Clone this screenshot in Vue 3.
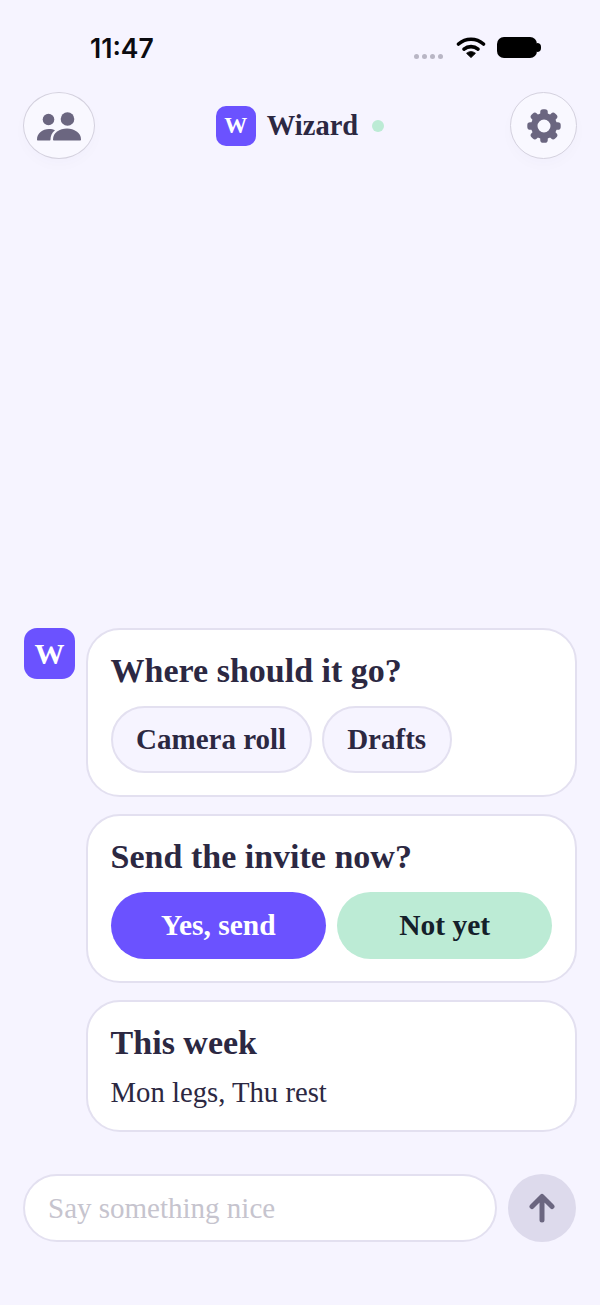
<script setup>
import { ref } from 'vue';

const message = ref('');
const where = ['Camera roll', 'Drafts'];
const teeth = [0, 45, 90, 135, 180, 225, 270, 315];
</script>

<template>
  <div class="screen">
    <div class="status">
      <span class="time">11:47</span>
      <div class="status-right">
        <div class="signal"><i></i><i></i><i></i><i></i></div>
        <svg class="wifi" width="30" height="22" viewBox="0 0 30 22">
          <path d="M2.500 8C9.800 1.600 20.200 1.600 27.500 8" fill="none" stroke="#000" stroke-width="3.600" stroke-linecap="round" />
          <path d="M8 13.200C12 9.800 18 9.800 22 13.200" fill="none" stroke="#000" stroke-width="3.600" stroke-linecap="round" />
          <path d="M15 21.500L10.600 17.300C13 15.200 17 15.200 19.400 17.300Z" fill="#000" stroke="#000" stroke-linejoin="round" />
        </svg>
        <div class="battery"></div>
      </div>
    </div>

    <header class="header">
      <button class="round-btn people">
        <svg width="46" height="32" viewBox="0 0 46 32" fill="#6b6680">
          <circle cx="12.500" cy="9.500" r="5.800" />
          <circle cx="31.500" cy="9" r="6.800" />
          <path d="M1 29.500C1 23.500 6.500 19 13 19C15.500 19 17.500 19.500 19 20.300C15.800 22.800 14.500 26 14.500 29.500C14.500 30.200 14.200 30.500 13.500 30.500H2C1.300 30.500 1 30.200 1 29.500Z" />
          <path d="M17 29.500C17 22.500 23.500 18.500 31 18.500C38 18.500 45 22.500 45 29.500C45 30.300 44.500 30.500 44 30.500H18C17.500 30.500 17 30.300 17 29.500Z" />
        </svg>
      </button>
      <div class="brand">
        <div class="logo small">W</div>
        <span class="brand-name">Wizard</span>
        <span class="online"></span>
      </div>
      <button class="round-btn gear">
        <svg width="34" height="34" viewBox="0 0 34 34" fill="#6b6680">
          <circle cx="17" cy="17" r="9.750" fill="none" stroke="#6b6680" stroke-width="6.500" />
          <rect
            v-for="angle in teeth"
            :key="angle"
            x="13.250"
            y="0.300"
            width="7.500"
            height="7"
            rx="2.800"
            :transform="`rotate(${angle} 17 17)`"
          />
        </svg>
      </button>
    </header>

    <main class="chat">
      <div class="logo big">W</div>
      <div class="cards">
        <section class="card">
          <h2>Where should it go?</h2>
          <div class="chips">
            <button v-for="item in where" :key="item" class="chip">{{ item }}</button>
          </div>
        </section>
        <section class="card">
          <h2>Send the invite now?</h2>
          <div class="choices">
            <button class="choice yes">Yes, send</button>
            <button class="choice no">Not yet</button>
          </div>
        </section>
        <section class="card">
          <h2>This week</h2>
          <p>Mon legs, Thu rest</p>
        </section>
      </div>
    </main>

    <footer class="composer">
      <input v-model="message" class="input" placeholder="Say something nice" />
      <button class="send">
        <svg width="28" height="30" viewBox="0 0 28 30" fill="none" stroke="#6b6680" stroke-width="5" stroke-linecap="round" stroke-linejoin="round">
          <path d="M14 27V4M4 13.500L14 3.500L24 13.500" />
        </svg>
      </button>
    </footer>
  </div>
</template>

<style>
body {
  background: #f6f4ff;
}
</style>

<style scoped>
.screen {
  width: 600px;
  height: 1305px;
  display: flex;
  flex-direction: column;
  background: #f6f4ff;
  font-family: "Liberation Serif", serif;
  color: #2c2842;
  overflow: hidden;
}

.status {
  height: 92px;
  flex-shrink: 0;
  display: flex;
  justify-content: space-between;
  padding: 31px 60px 0 90px;
  box-sizing: border-box;
}

.time {
  font-family: Inter, sans-serif;
  font-weight: 600;
  font-size: 26.500px;
  line-height: 34px;
  color: #0b0b10;
}

.status-right {
  display: flex;
  align-items: flex-start;
  margin-top: 6px;
}

.signal {
  display: flex;
  gap: 3px;
  margin-top: 17px;
  margin-right: 13px;
}

.signal i {
  width: 5px;
  height: 5px;
  border-radius: 50%;
  background: #b9b6c5;
}

.wifi {
  margin-right: 11px;
  margin-top: -1.500px;
}

.battery {
  position: relative;
  width: 40px;
  height: 21px;
  margin-right: 3px;
  border-radius: 7px;
  background: #000;
}

.battery::after {
  content: "";
  position: absolute;
  right: -4px;
  top: 6px;
  width: 4px;
  height: 9px;
  border-radius: 0 4px 4px 0;
  background: #000;
}

.header {
  display: flex;
  align-items: center;
  justify-content: space-between;
  padding: 0 23px;
  flex-shrink: 0;
}

.round-btn {
  height: 67px;
  border-radius: 50%;
  border: 1px solid #d4d1de;
  background: #f9f8ff;
  box-shadow: 0 6px 14px rgba(70, 60, 120, 0.02);
  display: flex;
  align-items: center;
  justify-content: center;
  padding: 0;
}

.people {
  width: 72px;
}

.gear {
  width: 67px;
}

.brand {
  display: flex;
  align-items: center;
  margin-right: 5px;
}

.logo {
  display: flex;
  align-items: center;
  justify-content: center;
  background: #6b52ff;
  color: #fff;
  font-weight: 700;
}

.logo.small {
  width: 40px;
  height: 40px;
  border-radius: 10px;
  font-size: 23px;
}

.logo.big {
  width: 51px;
  height: 51px;
  border-radius: 13px;
  font-size: 30px;
  flex-shrink: 0;
}

.brand-name {
  margin-left: 11px;
  font-size: 28.500px;
  font-weight: 700;
}

.online {
  width: 12px;
  height: 12px;
  margin-left: 14px;
  border-radius: 50%;
  background: #bcebd5;
}

.chat {
  margin-top: auto;
  display: flex;
  align-items: flex-start;
  gap: 12px;
  padding: 0 23px 0 24px;
}

.cards {
  flex: 1;
  display: flex;
  flex-direction: column;
  gap: 17.330px;
  margin-left: -1px;
}

.card {
  background: #fff;
  border: 2px solid #e3e0f0;
  border-radius: 34px;
  padding: 22px 22.600px;
}

h2 {
  margin: 0;
  font-size: 34px;
  line-height: 37px;
  font-weight: 700;
}

.card p {
  margin: 16px 0 0;
  font-size: 28.700px;
  line-height: 31px;
}

.chips {
  display: flex;
  gap: 10px;
  margin-top: 17px;
}

.chip {
  height: 66.670px;
  padding: 0 23.500px;
  border-radius: 34px;
  border: 2px solid #e3e0f0;
  background: #f6f4ff;
  color: #2c2842;
  font: 700 29px "Liberation Serif", serif;
}

.choices {
  display: grid;
  grid-template-columns: 1fr 1fr;
  gap: 11px;
  margin-top: 17px;
}

.choice {
  height: 66.670px;
  border: 0;
  border-radius: 34px;
  font: 700 29.500px "Liberation Serif", serif;
}

.yes {
  background: #6b52ff;
  color: #fff;
}

.no {
  background: #bcebd5;
  color: #14202a;
}

.composer {
  display: flex;
  align-items: center;
  gap: 11px;
  padding: 42px 24px 63px 23px;
  flex-shrink: 0;
}

.input {
  flex: 1;
  min-width: 0;
  height: 68px;
  box-sizing: border-box;
  padding: 0 23px;
  border: 2px solid #e3e0f0;
  border-radius: 34px;
  background: #fff;
  font: 400 29px "Liberation Serif", serif;
  outline: none;
}

.input::placeholder {
  color: #c6c4ce;
}

.send {
  width: 68px;
  height: 68px;
  flex-shrink: 0;
  border: 0;
  border-radius: 50%;
  background: #dddaec;
  padding: 0;
  display: flex;
  align-items: center;
  justify-content: center;
}
</style>
